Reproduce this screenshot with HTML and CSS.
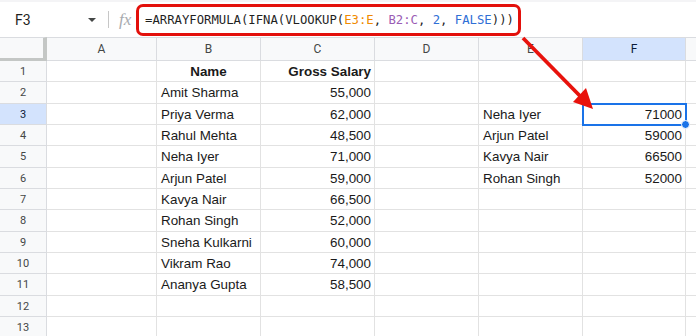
FILE: index.html
```html
<!DOCTYPE html>
<html lang="en">
<head>
  <meta charset="UTF-8" />
  <title>Sheet - VLOOKUP</title>
  <link rel="stylesheet" href="styles.css">
</head>
<body>
  <!-- Formula bar -->
  <div class="topbar">
    <div class="namebox">
      <span class="cellref">F3</span>
      <span class="caret"></span>
    </div>
    <div class="divider"></div>
    <span class="fx">fx</span>
    <div class="formula">=ARRAYFORMULA(IFNA(VLOOKUP(<span class="ref-orange">E3:E</span>, <span class="ref-purple">B2:C</span>, <span class="ref-num">2</span>, <span class="ref-num">FALSE</span>)))</div>
  </div>

  <!-- Grid -->
  <div class="sheet">
    <div class="corner"></div>
    <div class="colhead">A</div><div class="colhead">B</div><div class="colhead">C</div><div class="colhead">D</div><div class="colhead">E</div><div class="colhead active">F</div><div class="colhead"></div>

    <div class="rowhead">1</div><div class="cell"></div><div class="cell bold center">Name</div><div class="cell bold num">Gross Salary</div><div class="cell"></div><div class="cell"></div><div class="cell"></div><div class="cell"></div>
    <div class="rowhead">2</div><div class="cell"></div><div class="cell">Amit Sharma</div><div class="cell num">55,000</div><div class="cell"></div><div class="cell"></div><div class="cell"></div><div class="cell"></div>
    <div class="rowhead active">3</div><div class="cell"></div><div class="cell">Priya Verma</div><div class="cell num">62,000</div><div class="cell"></div><div class="cell">Neha Iyer</div><div class="cell num selected">71000</div><div class="cell"></div>
    <div class="rowhead">4</div><div class="cell"></div><div class="cell">Rahul Mehta</div><div class="cell num">48,500</div><div class="cell"></div><div class="cell">Arjun Patel</div><div class="cell num">59000</div><div class="cell"></div>
    <div class="rowhead">5</div><div class="cell"></div><div class="cell">Neha Iyer</div><div class="cell num">71,000</div><div class="cell"></div><div class="cell">Kavya Nair</div><div class="cell num">66500</div><div class="cell"></div>
    <div class="rowhead">6</div><div class="cell"></div><div class="cell">Arjun Patel</div><div class="cell num">59,000</div><div class="cell"></div><div class="cell">Rohan Singh</div><div class="cell num">52000</div><div class="cell"></div>
    <div class="rowhead">7</div><div class="cell"></div><div class="cell">Kavya Nair</div><div class="cell num">66,500</div><div class="cell"></div><div class="cell"></div><div class="cell"></div><div class="cell"></div>
    <div class="rowhead">8</div><div class="cell"></div><div class="cell">Rohan Singh</div><div class="cell num">52,000</div><div class="cell"></div><div class="cell"></div><div class="cell"></div><div class="cell"></div>
    <div class="rowhead">9</div><div class="cell"></div><div class="cell">Sneha Kulkarni</div><div class="cell num">60,000</div><div class="cell"></div><div class="cell"></div><div class="cell"></div><div class="cell"></div>
    <div class="rowhead">10</div><div class="cell"></div><div class="cell">Vikram Rao</div><div class="cell num">74,000</div><div class="cell"></div><div class="cell"></div><div class="cell"></div><div class="cell"></div>
    <div class="rowhead">11</div><div class="cell"></div><div class="cell">Ananya Gupta</div><div class="cell num">58,500</div><div class="cell"></div><div class="cell"></div><div class="cell"></div><div class="cell"></div>
    <div class="rowhead">12</div><div class="cell"></div><div class="cell"></div><div class="cell"></div><div class="cell"></div><div class="cell"></div><div class="cell"></div><div class="cell"></div>
    <div class="rowhead">13</div><div class="cell"></div><div class="cell"></div><div class="cell"></div><div class="cell"></div><div class="cell"></div><div class="cell"></div><div class="cell"></div>
  </div>

  <!-- Callout arrow from formula to result cell -->
  <svg class="arrow" width="696" height="336" viewBox="0 0 696 336">
    <line x1="523" y1="38" x2="582" y2="98" stroke="#e8120c" stroke-width="3.8" />
    <polygon points="593,109 573,102 586,88" fill="#e8120c" />
  </svg>
</body>
</html>
```

FILE: styles.css
```css
body {
  margin: 0;
  font-family: "Liberation Sans", Arial, sans-serif;
  background: #fff;
  overflow: hidden;
  position: relative;
  width: 696px;
  height: 336px;
}

/* formula bar */
.topbar {
  height: 37px;
  display: flex;
  align-items: center;
  box-sizing: border-box;
  border-top: 2px solid #f4f4f6;
}
.namebox {
  width: 108px;
  display: flex;
  align-items: center;
  padding-left: 15px;
  box-sizing: border-box;
}
.cellref {
  font-family: Roboto, "Liberation Sans", sans-serif;
  font-size: 14px;
  color: #1f1f1f;
  flex: 1;
}
.caret {
  width: 0; height: 0;
  border-left: 4px solid transparent;
  border-right: 4px solid transparent;
  border-top: 4px solid #444746;
  margin-right: 12px;
}
.divider {
  width: 1px;
  height: 17px;
  background: #c7c7c7;
}
.fx {
  font-family: "Liberation Serif", serif;
  font-style: italic;
  font-size: 17px;
  color: #a8abaf;
  margin-left: 10px;
  width: 17px;
}
.formula {
  width: 385px;
  height: 32px;
  box-sizing: border-box;
  border: 3px solid #e3100b;
  border-radius: 7px;
  padding-left: 6px;
  font-family: "DejaVu Sans Mono", monospace;
  font-size: 12.25px;
  line-height: 26px;
  color: #1f1f1f;
  white-space: nowrap;
}
.ref-orange { color: #f08a00; }
.ref-purple { color: #9a5cb4; }
.ref-num { color: #2f6fd6; }

/* grid */
.sheet {
  display: grid;
  grid-template-columns: 47px 110px 104px 114px 104px 104px 103px 40px;
  grid-template-rows: 24px repeat(13, 21.33px);
}
.corner {
  background: #f8f9fa;
  border-right: 4px solid #c4c7c5;
  border-bottom: 3px solid #c4c7c5;
  border-top: 1px solid #dadce0;
}
.colhead {
  background: #f8f9fa;
  border-top: 1px solid #dadce0;
  border-right: 1px solid #dadce0;
  border-bottom: 1px solid #dadce0;
  font-family: Roboto, "Liberation Sans", sans-serif;
  font-size: 12px;
  color: #444746;
  text-align: center;
  line-height: 22px;
}
.rowhead {
  background: #f8f9fa;
  border-right: 1px solid #dadce0;
  border-bottom: 1px solid #dadce0;
  font-family: Roboto, "Liberation Sans", sans-serif;
  font-size: 11px;
  color: #444746;
  text-align: center;
  line-height: 21px;
}
.colhead.active, .rowhead.active {
  background: #d3e3fd;
  color: #0b1b3a;
}
.cell, .colhead, .rowhead, .corner {
  box-sizing: border-box;
}
.cell {
  border-right: 1px solid #e2e2e2;
  border-bottom: 1px solid #e2e2e2;
  font-size: 13.4px;
  color: #1a1a1a;
  padding: 0 4px;
  line-height: 21px;
  white-space: nowrap;
  position: relative;
}
.center { text-align: center; }
.num { text-align: right; padding-right: 3px; }
.bold { font-weight: bold; }

.selected {
  outline: 2px solid #1a73e8;
  outline-offset: -1px;
  z-index: 2;
}
.selected::after {
  content: "";
  position: absolute;
  right: -5px;
  bottom: -5px;
  width: 7px;
  height: 7px;
  border-radius: 50%;
  background: #1a73e8;
  border: 1px solid #fff;
}

.arrow {
  position: absolute;
  left: 0;
  top: 0;
  pointer-events: none;
  z-index: 5;
}
```
